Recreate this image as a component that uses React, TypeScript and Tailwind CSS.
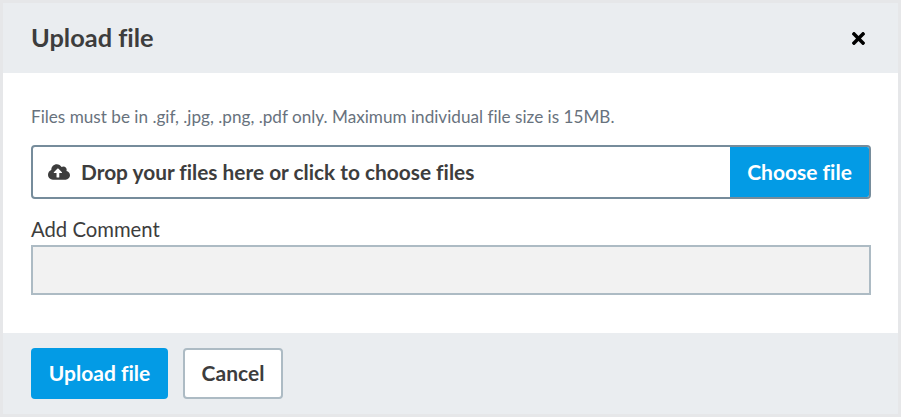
import { FaCloudUploadAlt, FaTimes } from 'react-icons/fa'

export default function App() {
  return (
    <div className="w-[901px] h-[417px] border-[3px] border-[#e6e7e9] bg-white font-['Lato','Noto_Sans',sans-serif] [font-variant-ligatures:none] text-[#3d3d3d] flex flex-col overflow-hidden">

      {/* ── Header ── */}
      <div className="h-[70px] flex-shrink-0 bg-[#eaedf0] flex items-center justify-between pl-[28px] pr-[30px]">
        <h2 className="text-[25.4px] font-bold leading-none pb-[1px]">Upload file</h2>
        <FaTimes className="text-[19px] text-black" />
      </div>

      {/* ── Body ── */}
      <div className="flex-1 pl-[28px] pr-[27px] pt-[34px]">
        <p className="text-[17.15px] leading-[20px] text-[#68727d]">
          Files must be in .gif, .jpg, .png, .pdf only. Maximum individual file size is 15MB.
        </p>
        <div className="mt-[18px] h-[54px] flex items-stretch border-2 border-[#768c9b] rounded-[4px] overflow-hidden">
          <div className="flex-1 flex items-center pl-[15px] gap-[11px]">
            <FaCloudUploadAlt className="text-[22px]" />
            <span className="text-[20.85px] font-bold">Drop your files here or click to choose files</span>
          </div>
          <div className="w-[139px] bg-[#039be5] text-white text-[21px] font-bold flex items-center justify-center">
            Choose file
          </div>
        </div>
        <label className="block mt-[18px] text-[20.3px] leading-[24px]">Add Comment</label>
        <div className="mt-[4px] h-[50px] border-2 border-[#adbbc4] bg-[#f2f2f2]" />
      </div>

      {/* ── Footer ── */}
      <div className="h-[81px] flex-shrink-0 bg-[#eaedf0] flex items-start gap-[15px] pl-[28px] pt-[15px]">
        <button className="w-[137px] h-[51px] pb-[2px] rounded-[4px] bg-[#039be5] text-white text-[21px] font-bold">Upload file</button>
        <button className="w-[100px] h-[51px] pb-[1px] rounded-[4px] bg-white border-2 border-[#adbbc4] text-[21px] font-bold">Cancel</button>
      </div>

    </div>
  )
}
